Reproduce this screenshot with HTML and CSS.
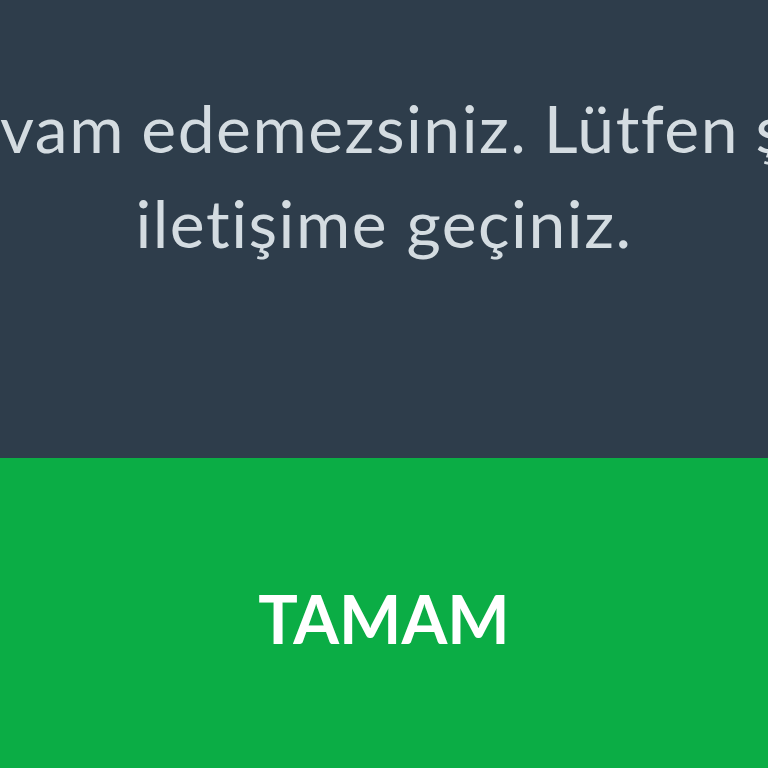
FILE: index.html
```html
<!DOCTYPE html>
<html lang="tr">
<head>
<meta charset="utf-8">
<link rel="stylesheet" href="styles.css">
</head>
<body>
<div class="dialog">
  <div class="message">
    <div class="line">
      <span class="side left">Bu hesap ile de</span>
      <span class="mid">vam edemezsiniz. Lütfen ş</span>
      <span class="side right">irketiniz ile</span>
    </div>
    <div class="line2">iletişime geçiniz.</div>
  </div>
  <button class="ok">TAMAM</button>
</div>
</body>
</html>
```

FILE: styles.css
```css
html, body {
  margin: 0;
  padding: 0;
  width: 768px;
  height: 768px;
  overflow: hidden;
}
.dialog {
  display: flex;
  flex-direction: column;
  width: 768px;
  height: 768px;
  font-family: Lato, "Noto Sans", sans-serif;
  font-variant-ligatures: none;
}
.message {
  height: 458px;
  box-sizing: border-box;
  padding-top: 80px;
  background: #2e3d4b;
  color: #d4dce1;
  font-size: 66px;
  line-height: 95px;
  letter-spacing: 1.5px;
  overflow: hidden;
}
.line {
  display: grid;
  grid-template-columns: 1fr auto 1fr;
  white-space: nowrap;
  word-spacing: -2px;
}
.side {
  display: flex;
  min-width: 0;
}
.left {
  justify-content: flex-end;
}
.right {
  justify-content: flex-start;
}
.line2 {
  text-align: center;
  white-space: nowrap;
}
.ok {
  flex: 1;
  display: flex;
  align-items: center;
  justify-content: center;
  border: 0;
  margin: 0;
  padding: 10px 0 0 0;
  background: #0bad45;
  color: #ffffff;
  font-family: Lato, "Noto Sans", sans-serif;
  font-variant-ligatures: none;
  font-weight: 700;
  font-size: 66px;
}
```
